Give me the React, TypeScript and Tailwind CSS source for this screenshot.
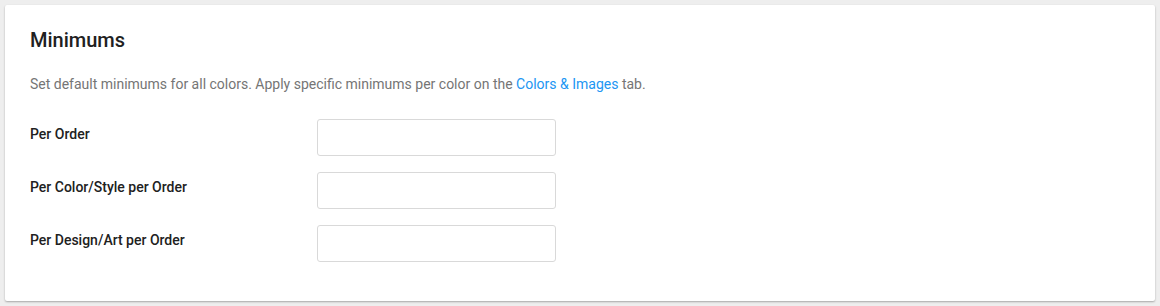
import React from 'react';

const ROWS = ['Per Order', 'Per Color/Style per Order', 'Per Design/Art per Order'];

export default function App() {
    return (
        <div className="min-h-[306px] bg-[#eeeeee] p-[5px] font-['Roboto',sans-serif]">
            <div className="h-[296px] rounded-[2px] bg-white px-[25px] pt-[21px] shadow-[0_1px_2px_rgba(0,0,0,0.3)]">
                <h2 className="text-[20px] font-medium leading-[28px] text-[#212121]">Minimums</h2>
                <p className="mt-[20px] text-[14px] leading-[20px] text-[#757575]">
                    Set default minimums for all colors. Apply specific minimums per color on the{' '}
                    <a className="text-[#2196f3]" href="#">Colors &amp; Images</a> tab.
                </p>
                <div className="mt-[25px] flex flex-col gap-[16px]">
                    {ROWS.map((label) => (
                        <div key={label} className="flex items-start">
                            <label className="w-[287px] pt-[6px] text-[14px] font-medium leading-[18px] text-[#212121]">{label}</label>
                            <input className="h-[37px] w-[239px] rounded-[3px] border border-[#d9d9d9] bg-white px-2 text-[14px] outline-none" />
                        </div>
                    ))}
                </div>
            </div>
        </div>
    );
}
